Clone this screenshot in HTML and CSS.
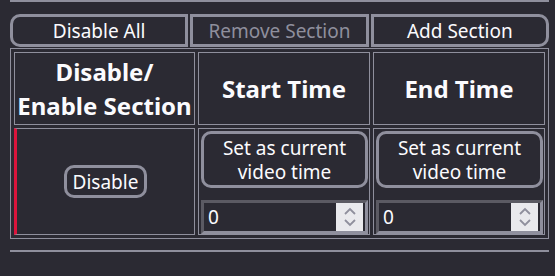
FILE: index.html
```html
<!DOCTYPE html>
<html lang="en">
<head>
<meta charset="UTF-8">
<meta name="viewport" content="width=device-width, initial-scale=1.0">
<title>Sections</title>
<link rel="stylesheet" href="styles.css">
</head>
<body>

<hr class="rule">
<div class="actions">
    <button class="btn first">Disable All</button>
    <button class="btn" disabled>Remove Section</button>
    <button class="btn last">Add Section</button>
</div>
<table class="sections">
    <tr>
        <th class="col-toggle">Disable/<br>Enable Section</th>
        <th class="col-start">Start Time</th>
        <th>End Time</th>
    </tr>
    <tr>
        <td class="toggle"><button class="btn round">Disable</button></td>
        <td class="time">
            <button class="btn round set">Set as current<br>video time</button>
            <div class="num">
                <input type="text" value="0">
                <span class="spin"><svg width="16" height="24" viewBox="0 0 16 24"><path d="M3 9 L8 4 L13 9 M3 15 L8 20 L13 15" fill="none" stroke="#8f8f9d" stroke-width="1.8"/></svg></span>
            </div>
        </td>
        <td class="time">
            <button class="btn round set">Set as current<br>video time</button>
            <div class="num">
                <input type="text" value="0">
                <span class="spin"><svg width="16" height="24" viewBox="0 0 16 24"><path d="M3 9 L8 4 L13 9 M3 15 L8 20 L13 15" fill="none" stroke="#8f8f9d" stroke-width="1.8"/></svg></span>
            </div>
        </td>
    </tr>
</table>
<hr class="rule bottom">

</body>
</html>
```

FILE: styles.css
```css
* {
    box-sizing: border-box;
}
body {
    margin: 0;
    padding: 0 6px 0 10px;
    background: #2b2a33;
    color: #fbfbfe;
    font-family: "Noto Sans", sans-serif;
    font-size: 19px;
}
.rule {
    margin: 0;
    border: 0;
    border-top: 2px solid #8f8f9d;
}
.rule.bottom {
    margin-top: 11px;
}
.actions {
    display: flex;
    gap: 2px;
    margin-top: 12px;
    height: 33px;
}
.btn {
    font: inherit;
    line-height: 24px;
    color: #fbfbfe;
    background: #2b2a33;
    border: 3px solid #8f8f9d;
    border-radius: 0;
    padding: 0 6px;
}
.actions .btn {
    flex: 1;
}
.actions .first {
    border-radius: 10px 0 0 10px;
}
.actions .last {
    border-radius: 0 10px 10px 0;
}
.btn:disabled {
    color: #8f8f9d;
}
.sections {
    width: 100%;
    table-layout: fixed;
    border: 1px solid #8f8f9d;
    border-spacing: 3px;
    margin-top: 1px;
}
.sections th,
.sections td {
    border: 1px solid #8f8f9d;
    padding: 1px;
}
.sections th {
    font-size: 24px;
    line-height: 34px;
    height: 73px;
    padding: 0;
}
.sections .col-toggle {
    width: 181px;
}
.sections .col-start {
    width: 172px;
}
.sections .toggle {
    border-left: 3px solid #dc143c;
    text-align: center;
    height: 107px;
}
.round {
    border-radius: 10px;
    height: 33px;
}
.sections .time {
    padding: 2px 1px 0 2px;
    vertical-align: top;
}
.set {
    width: 100%;
    height: 57px;
    padding: 1px 4px;
}
.num {
    display: flex;
    margin-top: 12px;
    height: 34px;
    border: 3px solid;
    border-color: #5b5a63 #8f8f9d #8f8f9d #5b5a63;
}
.num input {
    flex: 1;
    width: 0;
    min-width: 0;
    background: transparent;
    border: 0;
    color: #fbfbfe;
    font: inherit;
    padding: 0 4px;
}
.spin {
    width: 27px;
    margin-right: 2px;
    background: #e9e9ed;
    display: flex;
    align-items: center;
    justify-content: center;
}
```
